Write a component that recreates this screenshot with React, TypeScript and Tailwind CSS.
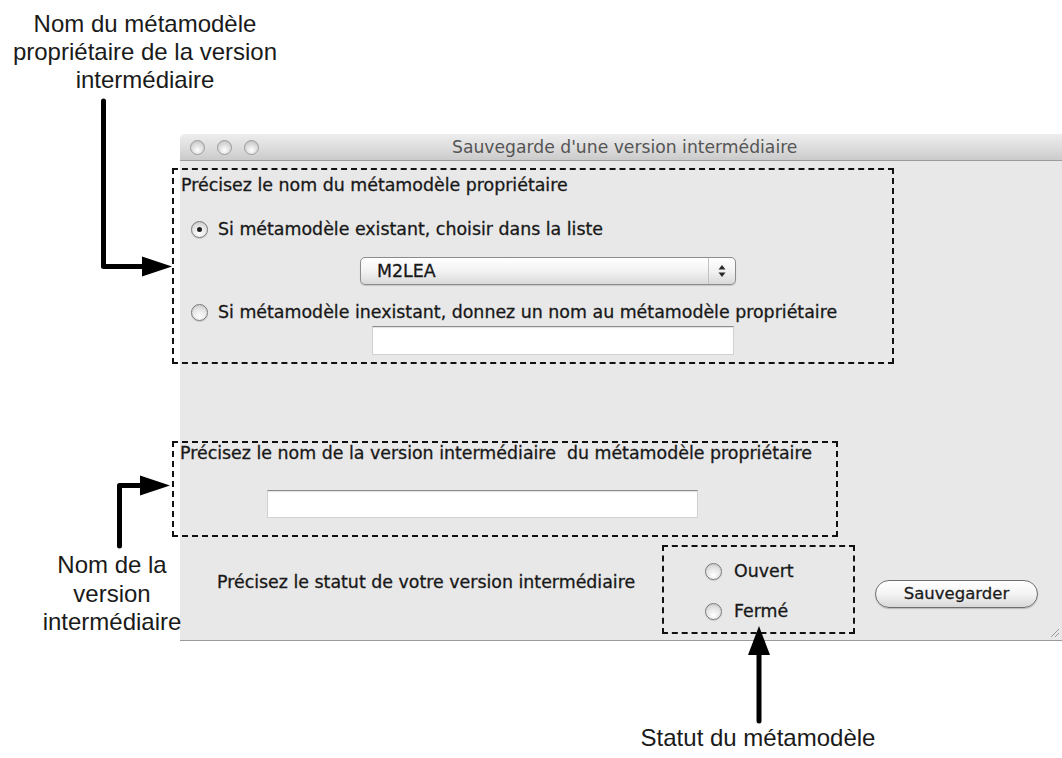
import React from "react";

function Radio({ checked }: { checked?: boolean }) {
  return (
    <span className="flex h-[17px] w-[17px] shrink-0 items-center justify-center rounded-full border border-[#7a7a7a] bg-[radial-gradient(circle_at_50%_75%,#ffffff,#e4e4e4_55%,#bdbdbd)] shadow-[0_1px_1px_rgba(0,0,0,0.15)]">
      {checked && <span className="h-[5px] w-[5px] rounded-full bg-[#1c1c1c]" />}
    </span>
  );
}

function Light() {
  return (
    <span className="block h-[15px] w-[15px] rounded-full border border-[#9c9c9c] bg-[radial-gradient(circle_at_50%_70%,#ffffff,#d6d6d6_60%,#b8b8b8)]" />
  );
}

function TextInput({ className }: { className: string }) {
  return (
    <div
      className={
        "border border-[#d2d2d2] border-t-[#8c8c8c] bg-white shadow-[inset_0_1px_1px_rgba(0,0,0,0.12)] " +
        className
      }
    />
  );
}

export default function App() {
  return (
    <div className="relative h-[758px] w-[1062px] overflow-hidden bg-white [font-family:'DejaVu_Sans',sans-serif] text-[#161616]">
      {/* window */}
      <div className="ml-[180px] w-[882px] pt-[134px]">
        <div className="flex h-[27px] items-center rounded-tl-[5px] border-b border-[#9c9c9c] bg-gradient-to-b from-[#ededed] via-[#dedede] to-[#cacaca]">
          <div className="flex gap-[12px] pl-[10px]">
            <Light />
            <Light />
            <Light />
          </div>
          <span className="ml-[193px] text-[17.2px] leading-[22px] text-[#555555]">
            Sauvegarde d'une version intermédiaire
          </span>
        </div>

        <div className="relative h-[480px] border-b border-[#9a9a9a] bg-[#e8e8e8] pt-[7px] text-[17.4px] [-webkit-text-stroke:0.3px_#222222]">
          {/* group 1 */}
          <div className="-ml-[8px] h-[196px] w-[722px] border-2 border-dashed border-[#111] pl-[7px] pt-[4px]">
            <div className="leading-[22px]">Précisez le nom du métamodèle propriétaire</div>
            <div className="mt-[22px] flex h-[22px] items-center gap-[10px] pl-[10px]">
              <Radio checked />
              <span className="leading-[22px]">Si métamodèle existant, choisir dans la liste</span>
            </div>
            <div className="ml-[179px] mt-[17px] flex h-[28px] w-[376px] items-center rounded-[5px] border border-[#8c8c8c] bg-gradient-to-b from-white via-[#f3f3f3] to-[#d9d9d9] shadow-[0_1px_1px_rgba(0,0,0,0.15)]">
              <span className="flex-1 pl-[16px] leading-[22px]">M2LEA</span>
              <span className="flex h-full w-[27px] items-center justify-center border-l border-[#c2c2c2]">
                <svg width="8" height="14" viewBox="0 0 8 14">
                  <path d="M4 1 L7.5 5.5 H0.5 Z" fill="#2a2a2a" />
                  <path d="M4 13 L7.5 8.5 H0.5 Z" fill="#2a2a2a" />
                </svg>
              </span>
            </div>
            <div className="mt-[16px] flex h-[22px] items-center gap-[10px] pl-[10px]">
              <Radio />
              <span className="leading-[22px]">
                Si métamodèle inexistant, donnez un nom au métamodèle propriétaire
              </span>
            </div>
            <TextInput className="ml-[191px] mt-[3px] h-[29px] w-[362px]" />
          </div>

          {/* group 2 */}
          <div className="-ml-[8px] mt-[77px] h-[96px] w-[666px] border-2 border-dashed border-[#111] pl-[6px] pt-[1px]">
            <div className="whitespace-pre leading-[18px]">
              Précisez le nom de la version intermédiaire  du métamodèle propriétaire
            </div>
            <TextInput className="ml-[87px] mt-[28px] h-[28px] w-[431px]" />
          </div>

          {/* status row */}
          <div className="mt-[8px] flex h-[89px] items-start">
            <div className="ml-[37px] mt-[26px] w-[445px] leading-[22px]">
              Précisez le statut de votre version intermédiaire
            </div>
            <div className="h-[89px] w-[193px] border-2 border-dashed border-[#111] pl-[41px] pt-[13px]">
              <div className="flex h-[22px] items-center gap-[12px]">
                <Radio />
                <span className="leading-[22px]">Ouvert</span>
              </div>
              <div className="mt-[18px] flex h-[22px] items-center gap-[12px]">
                <Radio />
                <span className="leading-[22px]">Fermé</span>
              </div>
            </div>
            <button className="ml-[20px] mt-[35px] flex h-[28px] w-[163px] items-center justify-center rounded-full border border-[#6e6e6e] bg-gradient-to-b from-white via-[#f4f4f4] to-[#d8d8d8] text-[16.5px] leading-[20px] text-[#1a1a1a] shadow-[0_1px_1px_rgba(0,0,0,0.2)]">
              Sauvegarder
            </button>
          </div>

          {/* resize grip */}
          <svg className="absolute bottom-[2px] right-[2px]" width="12" height="12" viewBox="0 0 12 12">
            <path d="M11 3 L3 11 M11 7 L7 11" stroke="#9a9a9a" strokeWidth="1" />
          </svg>
        </div>
      </div>

      {/* annotation arrows */}
      <svg className="pointer-events-none absolute left-0 top-0" width="1062" height="758" viewBox="0 0 1062 758">
        <path d="M103.5 101 V266.5 H146" fill="none" stroke="#000" strokeWidth="5" strokeLinecap="round" strokeLinejoin="round" />
        <polygon points="142,256.5 172,266.5 142,276.5" fill="#000" />
        <path d="M119.5 546 V485.5 H144" fill="none" stroke="#000" strokeWidth="5" strokeLinecap="round" strokeLinejoin="round" />
        <polygon points="140,475.5 170,485.5 140,495.5" fill="#000" />
        <path d="M759 721 V650" fill="none" stroke="#000" strokeWidth="5" strokeLinecap="round" />
        <polygon points="748,655 759,626 770,655" fill="#000" />
      </svg>

      {/* annotation labels */}
      <div className="absolute left-0 top-[10px] w-[290px] text-center [font-family:'Liberation_Sans',Arial,sans-serif] text-[24px] leading-[28px] text-[#1a1a1a]">
        Nom du métamodèle
        <br />
        propriétaire de la version
        <br />
        intermédiaire
      </div>
      <div className="absolute left-[12px] top-[551px] w-[200px] text-center [font-family:'Liberation_Sans',Arial,sans-serif] text-[24px] leading-[28.5px] text-[#1a1a1a]">
        Nom de la
        <br />
        version
        <br />
        intermédiaire
      </div>
      <div className="absolute left-[608px] top-[724px] w-[300px] text-center [font-family:'Liberation_Sans',Arial,sans-serif] text-[24px] leading-[28px] text-[#1a1a1a]">
        Statut du métamodèle
      </div>
    </div>
  );
}
